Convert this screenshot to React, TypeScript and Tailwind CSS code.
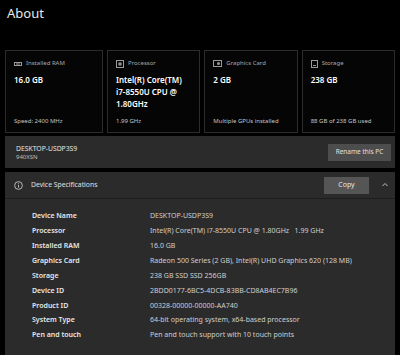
import React from 'react';

const font = { fontFamily: '"Segoe UI", "Noto Sans", "Open Sans", sans-serif' };

const RamIcon = () => (
  <svg width="8" height="6" viewBox="0 0 8 6" className="shrink-0">
    <rect x="0.5" y="1.5" width="7" height="3" fill="none" stroke="#9a9a9a" strokeWidth="1" />
    <rect x="2" y="2.5" width="4" height="1" fill="#9a9a9a" />
  </svg>
);

const CpuIcon = () => (
  <svg width="8" height="8" viewBox="0 0 8 8" className="shrink-0">
    <rect x="0.5" y="0.5" width="7" height="7" fill="none" stroke="#9a9a9a" strokeWidth="1" />
    <rect x="2.5" y="2.5" width="3" height="3" fill="#9a9a9a" />
  </svg>
);

const GpuIcon = () => (
  <svg width="9" height="7" viewBox="0 0 9 7" className="shrink-0">
    <rect x="0.5" y="0.5" width="8" height="6" fill="none" stroke="#9a9a9a" strokeWidth="1" />
    <circle cx="5.5" cy="3.5" r="1.5" fill="#9a9a9a" />
  </svg>
);

const DiskIcon = () => (
  <svg width="7" height="8" viewBox="0 0 7 8" className="shrink-0">
    <rect x="0.5" y="0.5" width="6" height="7" fill="none" stroke="#9a9a9a" strokeWidth="1" />
    <rect x="2" y="5" width="3" height="1" fill="#9a9a9a" />
  </svg>
);

const cards = [
  { icon: <RamIcon />, label: 'Installed RAM', value: ['16.0 GB'], foot: 'Speed: 2400 MHz' },
  { icon: <CpuIcon />, label: 'Processor', value: ['Intel(R) Core(TM)', 'i7-8550U CPU @', '1.80GHz'], foot: '1.99 GHz' },
  { icon: <GpuIcon />, label: 'Graphics Card', value: ['2 GB'], foot: 'Multiple GPUs installed' },
  { icon: <DiskIcon />, label: 'Storage', value: ['238 GB'], foot: '88 GB of 238 GB used' },
];

const specs: [string, string][] = [
  ['Device Name', 'DESKTOP-USDP3S9'],
  ['Processor', 'Intel(R) Core(TM) i7-8550U CPU @ 1.80GHz   1.99 GHz'],
  ['Installed RAM', '16.0 GB'],
  ['Graphics Card', 'Radeon 500 Series (2 GB), Intel(R) UHD Graphics 620 (128 MB)'],
  ['Storage', '238 GB SSD SSD 256GB'],
  ['Device ID', '2BDD0177-6BC5-4DCB-83BB-CD8AB4EC7B96'],
  ['Product ID', '00328-00000-00000-AA740'],
  ['System Type', '64-bit operating system, x64-based processor'],
  ['Pen and touch', 'Pen and touch support with 10 touch points'],
];

export default function App() {
  return (
    <div className="w-[400px] h-[355px] overflow-hidden bg-black text-white" style={font}>
      {/* Title */}
      <div className="px-[7px] pt-[3px] h-[50px] text-[13px] leading-[20px] text-[#e8e8e8]">About</div>

      {/* Summary cards */}
      <div className="grid grid-cols-[98px_1fr_1fr_1fr] gap-[4px] px-[5px]">
        {cards.map((c) => (
          <div
            key={c.label}
            className="h-[83px] border border-[#2c2c2c] bg-[#050505] pl-[8px] pr-[4px] pt-[8px] pb-[7px] flex flex-col"
          >
            <div className="flex items-center gap-[4px] text-[6px] leading-[9px] text-[#a8a8a8]">
              {c.icon}
              <span>{c.label}</span>
            </div>
            <div className="mt-[6px] text-[8px] leading-[12px] font-semibold text-white">
              {c.value.map((v) => (
                <div key={v}>{v}</div>
              ))}
            </div>
            <div className="mt-auto text-[6px] leading-[8px] text-[#c4c4c4] whitespace-nowrap">{c.foot}</div>
          </div>
        ))}
      </div>

      {/* PC name */}
      <div className="mx-[5px] mt-[3px] h-[32px] bg-[#2b2b2b] flex items-center justify-between pl-[11px] pr-[4px]">
        <div>
          <div className="text-[6.8px] leading-[9px] text-[#e6e6e6]">DESKTOP-USDP3S9</div>
          <div className="text-[6px] leading-[8px] text-[#bdbdbd]">940XSN</div>
        </div>
        <div className="w-[63px] h-[17px] bg-[#4d4d4d] text-[6.5px] text-[#e0e0e0] flex items-center justify-center">
          Rename this PC
        </div>
      </div>

      {/* Device specifications */}
      <div className="mx-[5px] mt-[4px] bg-[#2b2b2b]">
        <div className="h-[27px] flex items-center pl-[9px] pr-[6px] border-b border-[#1e1e1e]">
          <svg width="9" height="9" viewBox="0 0 10 10" className="shrink-0">
            <circle cx="5" cy="5" r="4.3" fill="none" stroke="#d8d8d8" strokeWidth="0.9" />
            <rect x="4.55" y="4.3" width="0.9" height="3" fill="#d8d8d8" />
            <rect x="4.55" y="2.6" width="0.9" height="0.9" fill="#d8d8d8" />
          </svg>
          <span className="ml-[8px] text-[6.8px] text-[#e0e0e0]">Device Specifications</span>
          <div className="ml-auto w-[45px] h-[17px] bg-[#555555] text-[7px] text-[#e6e6e6] flex items-center justify-center">
            Copy
          </div>
          <svg width="8" height="6" viewBox="0 0 8 6" className="ml-[12px] shrink-0">
            <path d="M1.5 4 L4 1.5 L6.5 4" fill="none" stroke="#d0d0d0" strokeWidth="0.9" />
          </svg>
        </div>
        <div className="pt-[10px] pb-[12px] pl-[27px]">
          {specs.map(([k, v]) => (
            <div key={k} className="flex h-[14.9px] items-center">
              <div className="w-[118px] text-[7px] font-semibold text-[#e8e8e8]">{k}</div>
              <div className="text-[7px] text-[#cfcfcf] whitespace-pre">{v}</div>
            </div>
          ))}
        </div>
      </div>
    </div>
  );
}
